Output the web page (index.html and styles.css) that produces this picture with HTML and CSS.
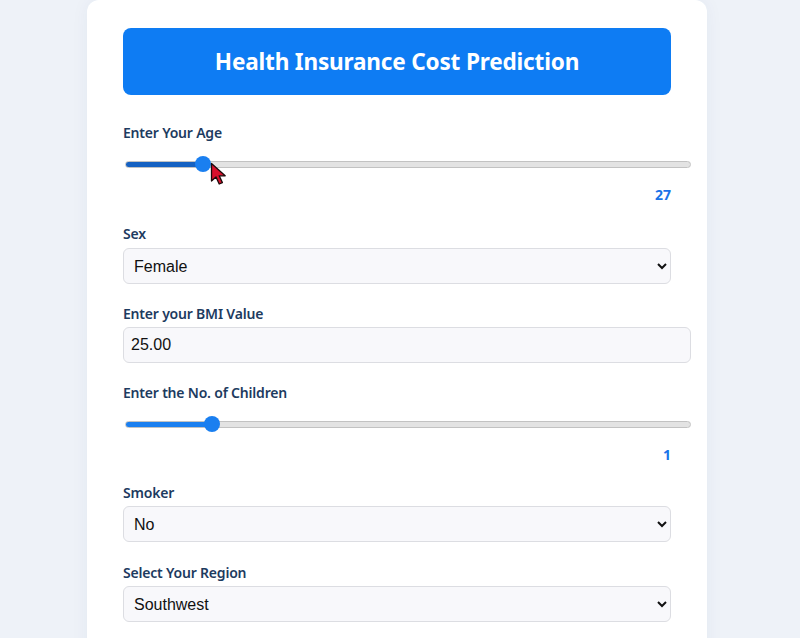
FILE: index.html
```html
<!DOCTYPE html>
<html lang="en">
<head>
<meta charset="utf-8">
<title>Health Insurance Cost Prediction</title>
<link rel="stylesheet" href="styles.css">
</head>
<body>
<div class="page">
  <main class="card">
    <h1 class="title">Health Insurance Cost Prediction</h1>

    <div class="group slider-group">
      <label class="label" for="age">Enter Your Age</label>
      <div class="range-wrap">
        <input id="age" class="range range-active" type="range" min="18" max="90" value="27" style="--p:13.4%">
        <svg class="cursor" width="18" height="24" viewBox="0 0 18 24" aria-hidden="true">
          <path d="M1.5 1.5 L1.5 19 L6 15 L9.2 22 L12.4 20.6 L9.2 13.8 L15.2 13.8 Z" fill="#d8102c" stroke="#1a0a0a" stroke-width="1.3" stroke-linejoin="round"/>
        </svg>
      </div>
      <div class="value">27</div>
    </div>

    <div class="group">
      <label class="label" for="sex">Sex</label>
      <select id="sex" class="field select">
        <option>Female</option>
        <option>Male</option>
      </select>
    </div>

    <div class="group">
      <label class="label label-tight" for="bmi">Enter your BMI Value</label>
      <input id="bmi" class="field number" type="text" value="25.00">
    </div>

    <div class="group slider-group slider-group-short">
      <label class="label" for="children">Enter the No. of Children</label>
      <div class="range-wrap">
        <input id="children" class="range" type="range" min="0" max="7" value="1" style="--p:14.3%">
      </div>
      <div class="value">1</div>
    </div>

    <div class="group group-wide">
      <label class="label label-tight" for="smoker">Smoker</label>
      <select id="smoker" class="field select">
        <option>No</option>
        <option>Yes</option>
      </select>
    </div>

    <div class="group">
      <label class="label label-tight" for="region">Select Your Region</label>
      <select id="region" class="field select">
        <option>Southwest</option>
        <option>Southeast</option>
        <option>Northwest</option>
        <option>Northeast</option>
      </select>
    </div>
  </main>
</div>
</body>
</html>
```

FILE: styles.css
```css
* { box-sizing: border-box; }

html, body {
  margin: 0;
  padding: 0;
  background: #eef2f8;
  font-family: "Noto Sans", "Open Sans", sans-serif;
}

.page {
  display: flex;
  justify-content: center;
  padding-right: 6px;
  min-height: 638px;
  overflow: hidden;
}

.card {
  width: 620px;
  background: #ffffff;
  border-radius: 12px 12px 0 0;
  padding: 28px 36px 40px;
  min-height: 700px;
  box-shadow: 0 0 18px rgba(30, 60, 110, 0.05);
}

.title {
  margin: 0 0 28px;
  height: 67px;
  background: #0e7cf3;
  color: #ffffff;
  border-radius: 8px;
  display: flex;
  align-items: center;
  justify-content: center;
  font-size: 22.6px;
  font-weight: 700;
  letter-spacing: -0.2px;
}

.group {
  margin-bottom: 20px;
}

.group-wide {
  margin-bottom: 21px;
}

.slider-group {
  margin-bottom: 19px;
}

.slider-group-short {
  margin-bottom: 18px;
}

.label {
  display: block;
  font-size: 14px;
  line-height: 20px;
  font-weight: 600;
  letter-spacing: -0.2px;
  color: #1d3b5f;
  margin-bottom: 4px;
}

.label-tight { margin-bottom: 3px; }

.range-wrap {
  position: relative;
  margin-top: 13px;
  height: 16px;
}

.range {
  -webkit-appearance: none;
  appearance: none;
  display: block;
  margin: 0 0 0 2px;
  width: calc(100% + 18px);
  height: 16px;
  background: transparent;
  outline: none;
}

.range::-webkit-slider-runnable-track {
  height: 7px;
  border-radius: 4px;
  border: 1px solid #c2c2c2;
  background: linear-gradient(to right, #1a7ff0 0, #1a7ff0 var(--p), #e3e3e3 var(--p), #e3e3e3 100%);
}

.range-active::-webkit-slider-runnable-track {
  background: linear-gradient(to right, #1561c2 0, #1561c2 var(--p), #e3e3e3 var(--p), #e3e3e3 100%);
}

.range::-webkit-slider-thumb {
  -webkit-appearance: none;
  appearance: none;
  width: 16px;
  height: 16px;
  border-radius: 50%;
  border: none;
  background: #1a7ff0;
  margin-top: -5.5px;
}

.cursor {
  position: absolute;
  left: 87px;
  top: 6px;
}

.value {
  margin-top: 13px;
  text-align: right;
  font-size: 14px;
  line-height: 20px;
  font-weight: 700;
  color: #1a73e8;
}

.field {
  display: block;
  height: 36px;
  border: 1px solid #dcdde2;
  border-radius: 6px;
  background-color: #f8f8fb;
  font-family: "Liberation Sans", Arial, sans-serif;
  font-size: 16px;
  color: #111111;
}

.select {
  width: 100%;
  padding: 0 8px 0 6px;
}

.number {
  width: calc(100% + 20px);
  padding: 0 10px 0 7px;
  outline: none;
}
```
